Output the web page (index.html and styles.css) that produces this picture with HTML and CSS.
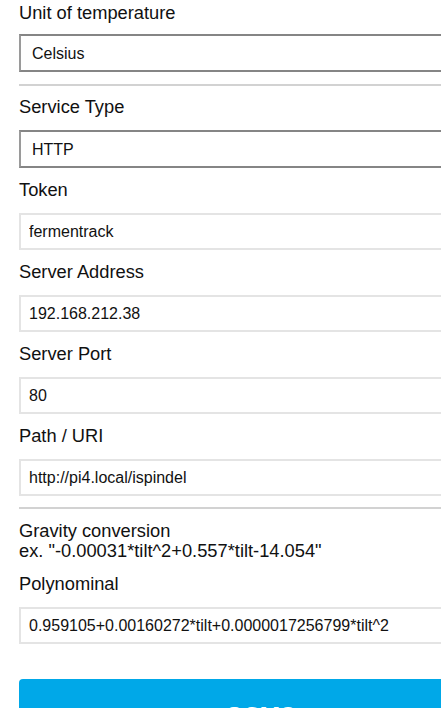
FILE: index.html
```html
<!DOCTYPE html>
<html lang="en">
<head>
<meta charset="utf-8">
<title>Settings</title>
<link rel="stylesheet" href="styles.css">
</head>
<body>
<form class="form">
  <label class="lbl lbl-first">Unit of temperature</label>
  <select class="sel"><option>Celsius</option></select>
  <hr class="rule">
  <label class="lbl">Service Type</label>
  <select class="sel"><option>HTTP</option></select>
  <label class="lbl">Token</label>
  <input class="inp" type="text" value="fermentrack">
  <label class="lbl">Server Address</label>
  <input class="inp" type="text" value="192.168.212.38">
  <label class="lbl">Server Port</label>
  <input class="inp" type="text" value="80">
  <label class="lbl">Path / URI</label>
  <input class="inp" type="text" value="http://pi4.local/ispindel">
  <hr class="rule rule-2">
  <label class="lbl">Gravity conversion<br>ex. "-0.00031*tilt^2+0.557*tilt-14.054"</label>
  <label class="lbl">Polynominal</label>
  <input class="inp inp-last" type="text" value="0.959105+0.00160272*tilt+0.0000017256799*tilt^2">
  <button class="save" type="button">save</button>
</form>
</body>
</html>
```
FILE: styles.css
```css
html, body {
  margin: 0;
  padding: 0;
  overflow: hidden;
  background: #ffffff;
}
body {
  font-family: "Liberation Sans", Arial, sans-serif;
  color: #111111;
}
.form {
  display: flex;
  flex-direction: column;
  align-items: flex-start;
  padding: 3px 0 0 19px;
  width: 484px;
}
.lbl {
  display: block;
  font-size: 18.3px;
  line-height: 20px;
  margin-bottom: 13px;
  color: #111111;
}
.lbl-first {
  margin-bottom: 11px;
}
.sel {
  -webkit-appearance: none;
  appearance: none;
  box-sizing: border-box;
  width: 484px;
  height: 38px;
  margin: 0 0 12px 0;
  padding: 0 0 0 11px;
  border: 2px solid #9a9a9a;
  border-top-color: #858585;
  border-bottom-color: #858585;
  border-radius: 0;
  background: #ffffff;
  font-family: "Liberation Sans", Arial, sans-serif;
  font-size: 16px;
  color: #111111;
}
.rule {
  box-sizing: border-box;
  width: 484px;
  height: 2px;
  margin: 0 0 11px 0;
  border: 0;
  background: #d2d2d2;
}
.rule-2 {
  margin-top: -1px;
  margin-bottom: 12px;
}
.inp {
  box-sizing: border-box;
  width: 484px;
  height: 37px;
  margin: 0 0 12px 0;
  padding: 0 0 0 8px;
  border: 2px solid #e4e4e4;
  border-radius: 0;
  background: #ffffff;
  font-family: "Liberation Sans", Arial, sans-serif;
  font-size: 16px;
  color: #111111;
  outline: none;
}
.inp-last {
  margin-bottom: 35px;
}
.save {
  box-sizing: border-box;
  width: 484px;
  height: 64px;
  padding: 0;
  border: 0;
  border-radius: 4px;
  background: #00a8e8;
  color: #ffffff;
  font-family: "Liberation Sans", Arial, sans-serif;
  font-weight: bold;
  font-size: 32px;
  line-height: 40px;
  padding-top: 14px;
  display: flex;
  align-items: flex-start;
  justify-content: center;
}
```
